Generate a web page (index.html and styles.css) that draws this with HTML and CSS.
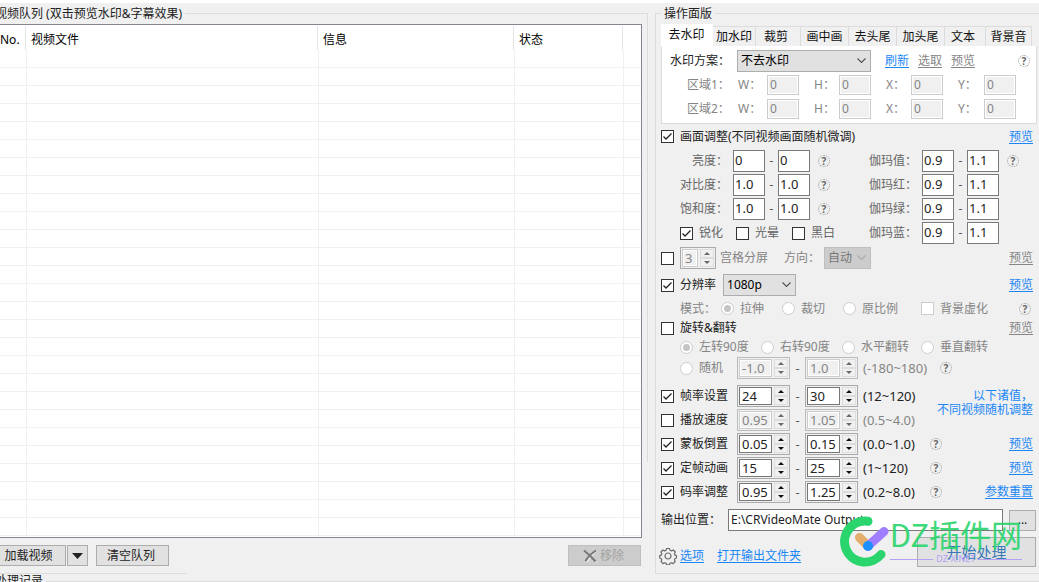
FILE: index.html
```html
<!DOCTYPE html>
<html lang="zh-CN">
<head>
<meta charset="utf-8">
<title>CRVideoMate</title>
<link rel="stylesheet" href="styles.css">
</head>
<body>
<main class="main">
  <fieldset class="group queue">
    <legend>视频队列 (双击预览水印&amp;字幕效果)</legend>
    <div class="list">
      <table class="grid-table">
        <colgroup><col class="c-no"><col class="c-file"><col class="c-info"><col class="c-state"><col></colgroup>
        <thead><tr><th>No.</th><th>视频文件</th><th>信息</th><th>状态</th><th class="last"></th></tr></thead>
        <tbody><tr><td></td><td></td><td></td><td></td><td class="last"></td></tr></tbody>
      </table>
    </div>
    <div class="queue-bar">
      <button class="btn load" type="button">加载视频</button>
      <button class="btn drop" type="button" aria-label="更多"><svg width="11" height="6" viewBox="0 0 11 6"><path d="M0 0h11L5.500 6z" fill="#222"/></svg></button>
      <button class="btn clear" type="button">清空队列</button>
      <button class="btn remove" type="button" disabled><svg width="14" height="14" viewBox="0 0 14 14" fill="none"><path d="M3 2.500Q8 7 13.500 13.500M13.500 2L8 7.500L4 13" stroke="#fff" stroke-width="1"/><path d="M1 1.500Q7 6 12.500 12.500M13 1.500Q6 6 2.500 12" stroke="#777" stroke-width="2"/></svg>移除</button>
    </div>
  </fieldset>

  <fieldset class="group panel">
    <legend>操作面版</legend>
    <div class="tabs" role="tablist">
      <button class="tab active" type="button" role="tab">去水印</button>
      <button class="tab" type="button" role="tab">加水印</button>
      <button class="tab" type="button" role="tab">裁剪</button>
      <button class="tab" type="button" role="tab">画中画</button>
      <button class="tab" type="button" role="tab">去头尾</button>
      <button class="tab" type="button" role="tab">加头尾</button>
      <button class="tab" type="button" role="tab">文本</button>
      <button class="tab" type="button" role="tab">背景音</button>
    </div>
    <div class="tab-page">
      <div class="scheme">
        <label for="scheme">水印方案：</label>
        <select class="select" id="scheme"><option>不去水印</option></select>
        <span class="links"><a href="#">刷新</a><a class="off" href="#">选取</a><a class="off" href="#">预览</a></span>
        <span class="help">?</span>
      </div>
      <div class="area off">
        <span class="name">区域1：</span>
        <label for="w1">W：</label><input class="box" id="w1" value="0" disabled>
        <label for="h1">H：</label><input class="box" id="h1" value="0" disabled>
        <label for="x1">X：</label><input class="box" id="x1" value="0" disabled>
        <label for="y1">Y：</label><input class="box" id="y1" value="0" disabled>
      </div>
      <div class="area off">
        <span class="name">区域2：</span>
        <label for="w2">W：</label><input class="box" id="w2" value="0" disabled>
        <label for="h2">H：</label><input class="box" id="h2" value="0" disabled>
        <label for="x2">X：</label><input class="box" id="x2" value="0" disabled>
        <label for="y2">Y：</label><input class="box" id="y2" value="0" disabled>
      </div>
    </div>

    <div class="row head">
      <label class="check"><input type="checkbox" checked>画面调整(不同视频画面随机微调)</label>
      <a class="end" href="#">预览</a>
    </div>
    <div class="tune">
      <label for="br">亮度：</label><input class="box" id="br" value="0"><span class="dash">-</span><input class="box" aria-label="亮度上限" value="0"><span class="help">?</span>
      <label for="gv">伽玛值：</label><input class="box" id="gv" value="0.9"><span class="dash">-</span><input class="box" aria-label="伽玛值上限" value="1.1"><span class="help">?</span>
    </div>
    <div class="tune">
      <label for="ct">对比度：</label><input class="box" id="ct" value="1.0"><span class="dash">-</span><input class="box" aria-label="对比度上限" value="1.0"><span class="help">?</span>
      <label for="gr">伽玛红：</label><input class="box" id="gr" value="0.9"><span class="dash">-</span><input class="box" aria-label="伽玛红上限" value="1.1">
    </div>
    <div class="tune">
      <label for="st">饱和度：</label><input class="box" id="st" value="1.0"><span class="dash">-</span><input class="box" aria-label="饱和度上限" value="1.0"><span class="help">?</span>
      <label for="gg">伽玛绿：</label><input class="box" id="gg" value="0.9"><span class="dash">-</span><input class="box" aria-label="伽玛绿上限" value="1.1">
    </div>
    <div class="tune">
      <span class="effects">
        <label class="check"><input type="checkbox" checked>锐化</label>
        <label class="check"><input type="checkbox">光晕</label>
        <label class="check"><input type="checkbox">黑白</label>
      </span>
      <label for="gb">伽玛蓝：</label><input class="box" id="gb" value="0.9"><span class="dash">-</span><input class="box" aria-label="伽玛蓝上限" value="1.1">
    </div>

    <div class="row split off">
      <label class="check"><input type="checkbox" aria-label="宫格分屏"></label>
      <span class="spin narrow"><input id="cells" value="3" disabled><span class="arrows"><button type="button" aria-label="增加" disabled></button><button type="button" aria-label="减少" disabled></button></span></span>
      <label class="cells-label" for="cells">宫格分屏</label>
      <label class="dir-label" for="dir">方向：</label>
      <select class="select dir" id="dir" disabled><option>自动</option></select>
      <a class="end off" href="#">预览</a>
    </div>
    <div class="row res">
      <label class="check"><input type="checkbox" checked>分辨率</label>
      <select class="select size" aria-label="分辨率"><option>1080p</option></select>
      <a class="end" href="#">预览</a>
    </div>
    <div class="row mode off">
      <span>模式：</span>
      <label class="check"><input type="radio" name="mode" checked disabled>拉伸</label>
      <label class="check"><input type="radio" name="mode" disabled>裁切</label>
      <label class="check"><input type="radio" name="mode" disabled>原比例</label>
      <label class="check"><input type="checkbox" disabled>背景虚化</label>
      <span class="help">?</span>
    </div>
    <div class="row turn-head">
      <label class="check"><input type="checkbox">旋转&amp;翻转</label>
      <a class="end off" href="#">预览</a>
    </div>
    <div class="row turn off">
      <label class="check"><input type="radio" name="turn" checked disabled>左转90度</label>
      <label class="check"><input type="radio" name="turn" disabled>右转90度</label>
      <label class="check"><input type="radio" name="turn" disabled>水平翻转</label>
      <label class="check"><input type="radio" name="turn" disabled>垂直翻转</label>
    </div>
    <div class="range off">
      <label class="check inset"><input type="radio" name="turn" disabled>随机</label>
      <span class="spin shut"><input aria-label="最小角度" value="-1.0" disabled><span class="arrows"><button type="button" aria-label="增加" disabled></button><button type="button" aria-label="减少" disabled></button></span></span><span class="dash">-</span><span class="spin shut"><input aria-label="最大角度" value="1.0" disabled><span class="arrows"><button type="button" aria-label="增加" disabled></button><button type="button" aria-label="减少" disabled></button></span></span>
      <span class="limits">(-180~180)</span><span class="help far">?</span>
    </div>

    <div class="ranges">
      <div class="range">
        <label class="check"><input type="checkbox" checked>帧率设置</label>
        <span class="spin"><input aria-label="最小帧率" value="24"><span class="arrows"><button type="button" aria-label="增加"></button><button type="button" aria-label="减少"></button></span></span><span class="dash">-</span><span class="spin"><input aria-label="最大帧率" value="30"><span class="arrows"><button type="button" aria-label="增加"></button><button type="button" aria-label="减少"></button></span></span>
        <span class="limits">(12~120)</span>
        <span class="note">以下诸值，<br>不同视频随机调整</span>
      </div>
      <div class="range">
        <label class="check"><input type="checkbox">播放速度</label>
        <span class="spin shut"><input aria-label="最小速度" value="0.95" disabled><span class="arrows"><button type="button" aria-label="增加" disabled></button><button type="button" aria-label="减少" disabled></button></span></span><span class="dash">-</span><span class="spin shut"><input aria-label="最大速度" value="1.05" disabled><span class="arrows"><button type="button" aria-label="增加" disabled></button><button type="button" aria-label="减少" disabled></button></span></span>
        <span class="limits off">(0.5~4.0)</span>
      </div>
      <div class="range">
        <label class="check"><input type="checkbox" checked>蒙板倒置</label>
        <span class="spin"><input aria-label="最小蒙板" value="0.05"><span class="arrows"><button type="button" aria-label="增加"></button><button type="button" aria-label="减少"></button></span></span><span class="dash">-</span><span class="spin"><input aria-label="最大蒙板" value="0.15"><span class="arrows"><button type="button" aria-label="增加"></button><button type="button" aria-label="减少"></button></span></span>
        <span class="limits">(0.0~1.0)</span><span class="help">?</span>
        <a class="end" href="#">预览</a>
      </div>
      <div class="range">
        <label class="check"><input type="checkbox" checked>定帧动画</label>
        <span class="spin"><input aria-label="最小定帧" value="15"><span class="arrows"><button type="button" aria-label="增加"></button><button type="button" aria-label="减少"></button></span></span><span class="dash">-</span><span class="spin"><input aria-label="最大定帧" value="25"><span class="arrows"><button type="button" aria-label="增加"></button><button type="button" aria-label="减少"></button></span></span>
        <span class="limits">(1~120)</span><span class="help">?</span>
        <a class="end" href="#">预览</a>
      </div>
      <div class="range">
        <label class="check"><input type="checkbox" checked>码率调整</label>
        <span class="spin"><input aria-label="最小码率" value="0.95"><span class="arrows"><button type="button" aria-label="增加"></button><button type="button" aria-label="减少"></button></span></span><span class="dash">-</span><span class="spin"><input aria-label="最大码率" value="1.25"><span class="arrows"><button type="button" aria-label="增加"></button><button type="button" aria-label="减少"></button></span></span>
        <span class="limits">(0.2~8.0)</span><span class="help">?</span>
        <a class="end" href="#">参数重置</a>
      </div>
    </div>

    <div class="output">
      <label for="out">输出位置：</label>
      <input class="box path" id="out" value="E:\CRVideoMate Output">
      <button class="btn browse" type="button">...</button>
    </div>
    <div class="actions">
      <svg class="gear" width="18" height="18" viewBox="-9 -9 18 18" fill="none" stroke="#6a6a6a" stroke-width="1.200" stroke-linejoin="round"><path d="M-1.500-7.500h3l.5 1.700 1.600.7 1.700-.9 2 2-.9 1.700.6 1.500 1.500.4v2.400l-1.500.5-.6 1.500.8 1.600-2 2-1.700-.8-1.500.6-.5 1.500h-2.800l-.5-1.500-1.500-.6-1.700.8-2-2 .8-1.600-.6-1.500-1.500-.5v-2.400l1.500-.4.6-1.500-.9-1.700 2-2 1.700.9 1.600-.7z"/><circle r="3"/></svg>
      <a href="#">选项</a>
      <a class="open" href="#">打开输出文件夹</a>
      <button class="btn start" type="button">开始处理</button>
    </div>
    <div class="mark">
      <svg width="50" height="52" viewBox="0 0 50 52" fill="none" stroke-linecap="round"><path d="M28 5.300A20.500 20.500 0 1 0 41 38.500" stroke="#2ad56d" stroke-width="9"/><path d="M19.500 21.500L28 30" stroke="#e3ae6b" stroke-width="9"/><path d="M44 15.500L28 30" stroke="#a17dff" stroke-width="9"/><circle cx="28" cy="30" r="5" fill="#1b8fff"/></svg>
      <div class="mark-text"><span class="mark-name">DZ插件网</span><span class="mark-site">DZ-X.NET</span></div>
    </div>
  </fieldset>
</main>
<fieldset class="group log"><legend>处理记录</legend></fieldset>
</body>
</html>
```
FILE: styles.css
```css
* { box-sizing: border-box; }
html { height: 100%; overflow: hidden; }
body {
  margin: 0;
  min-height: 100%;
  overflow: hidden;
  border-top: 3px solid #fff;
  background: #f0f0f0;
  color: #222;
  font: 12px/16px "Noto Sans", "Noto Sans CJK SC", sans-serif;
}
input, select, button { font: inherit; color: inherit; margin: 0; }
a { color: #1b87f5; text-decoration: underline; text-underline-offset: 2px; white-space: nowrap; }
.off, a.off { color: #858585; }
label, .name, .limits { white-space: nowrap; }

.main { display: flex; gap: 7px; }
.group { margin: 0; padding: 0; min-width: 0; border: 0 solid #dcdcdc; border-top-width: 1px; }
.group legend { padding: 0 3px; height: 21px; line-height: 22px; white-space: nowrap; }

/* video queue */
.queue {
  flex: 1;
  display: flex;
  flex-direction: column;
  margin-left: -8px;
  background:
    linear-gradient(#dcdcdc, #dcdcdc) no-repeat right top / 1px 448px,
    linear-gradient(#dcdcdc, #dcdcdc) no-repeat left bottom / 195px 1px;
}
.list {
  height: 514px;
  margin: 0 6px 0 8px;
  border: 1px solid #828790;
  border-left: 0;
  background: #fff;
}
.grid-table { width: 100%; height: 511px; table-layout: fixed; border-collapse: separate; border-spacing: 0; }
.c-no { width: 27px; }
.c-file { width: 292px; }
.c-info { width: 196px; }
.c-state { width: 109px; }
th {
  height: 25px;
  padding: 4px 0 0 4px;
  font-weight: 400;
  text-align: left;
  color: #000;
  background: linear-gradient(#e5e5e5, #e5e5e5) no-repeat right 1px top 1px / 1px 100%;
}
th:first-child { padding-left: 0; }
tbody { background: repeating-linear-gradient(#fff 0 17px, #f0f0f0 17px 18px); }
td { padding: 0; border-right: 1px solid #f0f0f0; }
.last { border: 0; background: none; }

.btn {
  padding: 0;
  border: 1px solid #adadad;
  background: #e1e1e1;
  display: flex;
  align-items: center;
  justify-content: center;
}
.queue-bar { display: flex; margin: 7px 7px 6px 6px; height: 21px; }
.load { width: 68px; padding-right: 7px; }
.drop { width: 21px; margin-left: 1px; }
.clear { width: 73px; margin-left: 8px; padding-right: 3px; }
.remove { width: 73px; margin-left: auto; padding-right: 2px; gap: 3px; color: #a3a3a3; background: #ccc; border-color: #bfbfbf; }

/* operation panel */
.panel { position: relative; flex: none; width: 384px; padding: 0 2px 0 5px; border-width: 1px 0 1px 1px; }
.tabs { display: flex; align-items: flex-end; height: 22px; padding-right: 4px; }
.tab {
  flex: 0 0 45px;
  height: 20px;
  padding: 0;
  border: 1px solid #dcdcdc;
  border-width: 1px 1px 0 0;
  background: #f0f0f0;
  color: #111;
  white-space: nowrap;
}
.tab:nth-child(2) { flex-basis: 43px; }
.tab:nth-child(3) { padding-right: 4px; }
.tab:nth-child(n+4) { flex-basis: 48px; }
.tab:nth-child(7) { flex-basis: 41px; padding-right: 4px; }
.tab:last-child { flex-basis: 46px; }
.tab.active { flex-basis: 52px; height: 22px; padding-bottom: 2px; border-color: #fff; background: #fff; }
.tab-page { height: 78px; padding: 1px 0 2px 8px; border: 1px solid #dcdcdc; border-top-color: #fff; background: #fff; }
.scheme { display: grid; grid-template-columns: 67px 134px 1fr 18px; align-items: center; height: 25px; }
.links { display: flex; gap: 9px; padding-left: 14px; }
.area {
  display: grid;
  grid-template-columns: 51px 29px 32px 40px 32px 40px 32px 41px 32px;
  align-items: center;
  height: 24px;
  padding-left: 17px;
}
.area label:nth-of-type(n+2) { padding-left: 15px; }

.select {
  width: 100%;
  height: 22px;
  padding: 0 3px;
  border: 1px solid #adadad;
  border-radius: 0;
  appearance: none;
  color: #000;
  background: #e1e1e1 url("data:image/svg+xml,%3Csvg xmlns='http://www.w3.org/2000/svg' width='9' height='6'%3E%3Cpath d='M.5.5l4 4 4-4' fill='none' stroke='%23555' stroke-width='1.2'/%3E%3C/svg%3E") no-repeat right 4px center;
}
.select:disabled {
  color: #777;
  opacity: 1;
  border-color: #bfbfbf;
  background: #ccc url("data:image/svg+xml,%3Csvg xmlns='http://www.w3.org/2000/svg' width='9' height='6'%3E%3Cpath d='M.5.5l4 4 4-4' fill='none' stroke='%23aaa' stroke-width='1.2'/%3E%3C/svg%3E") no-repeat right 4px center;
}
.box {
  width: 32px;
  height: 22px;
  padding: 0 2px 2px;
  border: 1px solid #7a7a7a;
  border-radius: 0;
  background: #fff;
  outline: 0;
}
.box:disabled { height: 20px; border-color: #ccc; box-shadow: inset 0 0 0 1px #fff; background: #f0f0f0; color: #858585; }
.help {
  display: block;
  width: 12px;
  height: 12px;
  border: 1px dotted #999;
  border-radius: 50%;
  font-size: 10px;
  font-weight: 700;
  line-height: 10px;
  text-align: center;
  color: #666;
}
.dash { text-align: center; color: #555; }

.check { display: flex; align-items: center; gap: 6px; }
.check input {
  flex: none;
  width: 13px;
  height: 13px;
  appearance: none;
  border: 1px solid #333;
  background: #fff;
  display: grid;
  place-items: center;
}
.check input[type="checkbox"]:checked {
  background: #fff url("data:image/svg+xml,%3Csvg xmlns='http://www.w3.org/2000/svg' width='11' height='11'%3E%3Cpath d='M1.500 5.500l2.500 2.500 5.500-5.500' fill='none' stroke='%23222' stroke-width='1.300'/%3E%3C/svg%3E") no-repeat center;
}
.check input[type="radio"] { border-radius: 50%; }
.check input:disabled { border-color: #ccc; }
.check input[type="radio"]:checked::before { content: ""; width: 7px; height: 7px; border-radius: 50%; background: #c4c4c4; }

.row { display: flex; align-items: center; }
.end { margin-left: auto; margin-right: 4px; }
.head { height: 25px; }
.tune {
  display: grid;
  grid-template-columns: 72px 32px 13px 32px 59px 53px 32px 13px 32px 1fr;
  align-items: center;
  height: 24px;
  color: #666;
}
.tune > label { justify-self: end; padding-right: 5px; }
.tune > .help { margin-left: 8px; }
.tune .box { padding: 0 1px 2px; color: #222; font-size: 13px; }
.effects { grid-column: span 5; display: flex; gap: 13px; padding-left: 19px; }

.split { height: 26px; }
.narrow.spin { width: 36px; margin: 0 4px 0 6px; }
.cells-label { width: 64px; }
.dir-label { width: 40px; }
.dir { width: 47px; }
.res { height: 28px; gap: 7px; }
.size { width: 73px; }
.mode { display: grid; grid-template-columns: 41px 61px 61px 78px 1fr 18px; height: 19px; padding-left: 19px; }
.turn-head { height: 20px; }
.turn { display: grid; grid-template-columns: 81px 81px 79px 1fr; height: 18px; padding-left: 19px; }
.inset { padding-left: 19px; }

.ranges { padding-top: 4px; }
.range {
  display: grid;
  grid-template-columns: 76px 53px 15px 53px 65px 13px 1fr;
  grid-template-rows: 24px;
  align-items: center;
  height: 24px;
  font-size: 13px;
}
.range .check, .range a, .note { font-size: 12px; }
.limits { padding-left: 5px; }
.range .help { margin-left: 7px; }
.range .help.far { margin-left: 17px; }
.range .end { grid-column: 7; }
.note {
  grid-column: 6 / 8;
  align-self: start;
  justify-self: end;
  margin-right: 4px;
  padding-top: 5px;
  line-height: 14px;
  text-align: right;
  color: #1b87f5;
  white-space: nowrap;
}
.spin { display: flex; gap: 2px; width: 53px; height: 22px; padding: 1px; border: 1px solid #aaa; background: #f0f0f0; font-size: 13px; }
.spin > input { flex: 1; min-width: 0; padding: 0 2px; border: 1px solid #777; border-radius: 0; background: #fff; outline: 0; }
.spin > input:disabled { border-color: #ccc; color: #858585; background: #f0f0f0; box-shadow: inset 0 0 0 1px #fff; }
.arrows { display: flex; flex-direction: column; width: 14px; }
.arrows button { flex: 1; display: grid; place-items: center; padding: 0; border: 1px solid #ddd; background: #f0f0f0; }
.arrows button::before { content: ""; border: 3px solid transparent; border-top-width: 0; border-bottom-color: #111; }
.arrows button + button::before { border-width: 3px 3px 0; border-color: #111 transparent transparent; }
.arrows button:disabled::before { opacity: .6; }
.shut { border-color: #bbb; }

.output { display: grid; grid-template-columns: 67px 1fr 27px; align-items: center; height: 32px; padding-right: 1px; }
.output .path { width: auto; margin-right: 6px; padding-left: 2px; }
.browse { height: 21px; }
.actions { display: flex; align-items: center; height: 32px; margin-bottom: 5px; padding-right: 1px; }
.actions a, .gear { margin-top: 8px; }
.gear { margin-left: -2px; margin-right: 3px; }
.open { margin-left: 13px; }
.start { width: 119px; height: 30px; margin-left: auto; font-size: 15px; color: #3679b5; }

/* logo lying over the lower right corner */
.mark { position: absolute; right: 17px; bottom: 5px; display: flex; pointer-events: none; }
.mark-text { display: flex; flex-direction: column; }
.mark-name { font: 31px/36px "Noto Sans CJK SC", sans-serif; color: #2ad56d; opacity: .9; white-space: nowrap; }
.mark-site { display: flex; align-items: center; gap: 3px; font-size: 9px; line-height: 14px; color: #b5a0f5; }
.mark-site::before, .mark-site::after { content: ""; flex: 1; height: 1px; background: #b5a0f5; }

.log { margin-left: -8px; border-top-width: 1px; }
.log legend { height: 14px; line-height: 14px; }
```
